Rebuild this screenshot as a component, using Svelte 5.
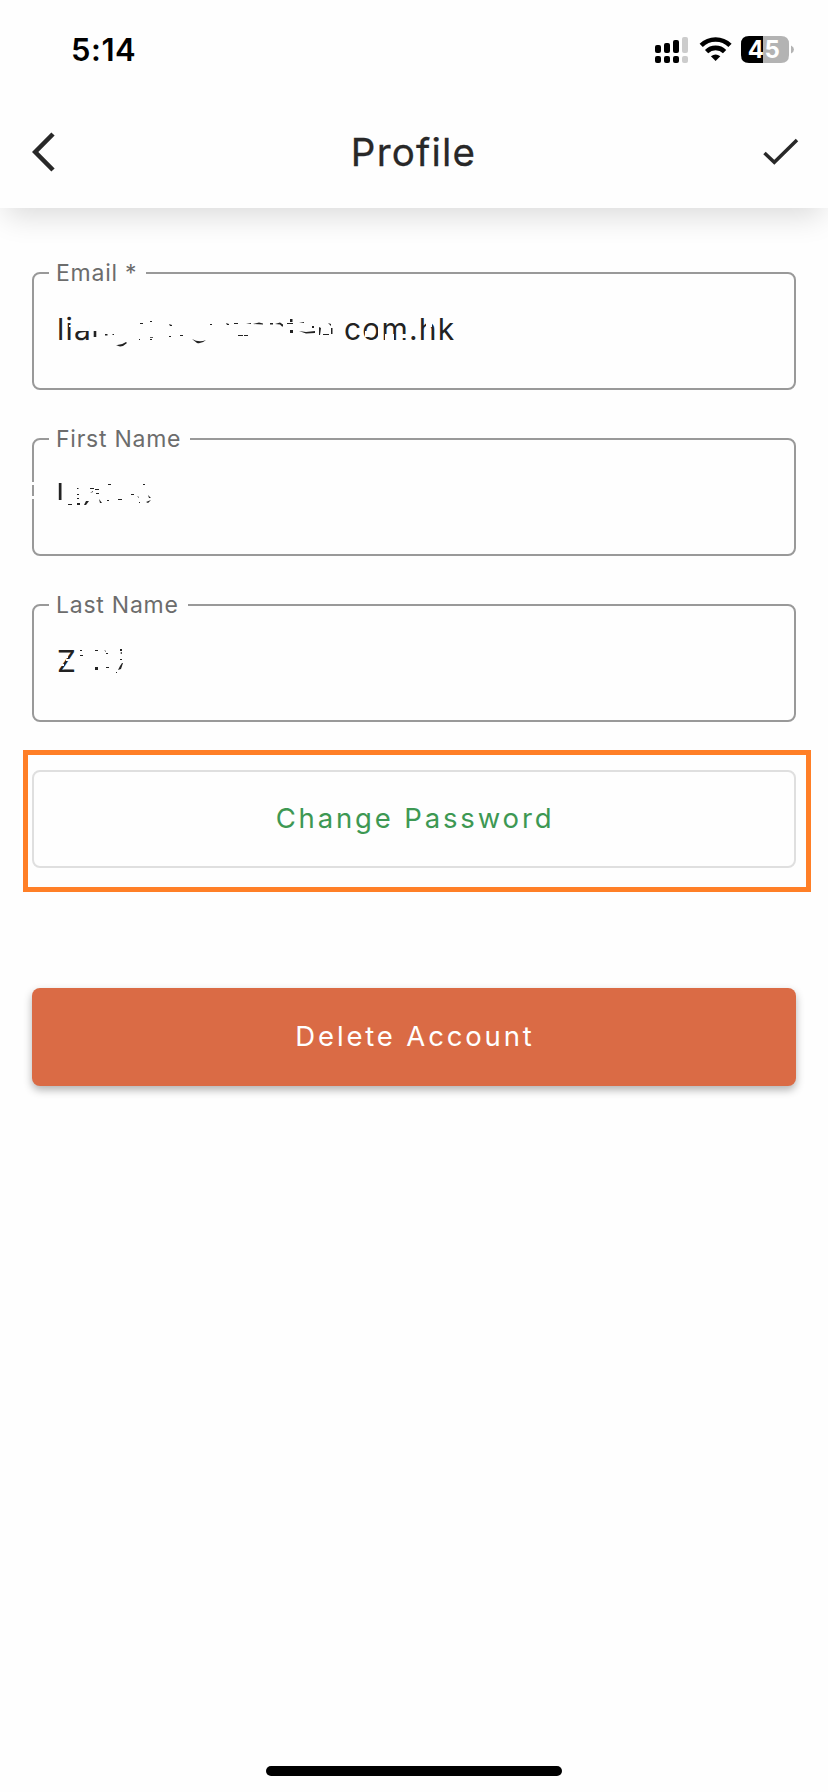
<script>
  const fields = [
    {
      label: 'Email *',
      text: 'lia',
      tail: 'com.hk',
      ink: 'M61.7 59h2.6v6h-2.6z M73 62h2.5v1.6h-2.5z M80.5 62h1.5v1h-1.5z M84 73q5 .5 10-3l1 1q-4 4-8 3.3z M108 51h3v1h-3z M118 49h2v1h-2z M107 67h1v1h-1z M118 65h3v.8h-3z M118 67h2v1h-2z M137 52l3 1v1h-2z M137 64h2v1h-2z M148 63h3v1h-3z M160 67q7 4 14 1q-4 4-9 3z M178 52h2v1h-2z M194 51l3 1v1h-2z M202 51h4v1h-4z M206 63h3v1h-3z M212 63h4v1h-4z M209 63h2v1h-2z M214 52l5-1v1z M221 52l6-1.5 4 1v1z M238 51h3v1.5h-3z M243 52l5-1.5 3 2v2h-1l-2-2z M258 47h2.5v3h-2.5z M255 51h6v1h-6z M258 58h3v3h-3z M267 51l5-1v1z M267 59l7 1 9-1v2l-9 .5z M280 54h2v2h-2z M287 55l2 1-1 7h-1z M296 51l3 1v2z M291 62h6v1h-6z M299 56h1.5v6h-1.5z',
      wipe: 'M37 53h2.5v2h-2.5z M41 47h16v12h-16z M320 58h5v4h-5z M333 59h4v6h-4z M346 55h3v9h-3z M353 62h9v8h-9z M370 62h9v4h-9z M394 50h6v5h-6z'
    },
    {
      label: 'First Name',
      text: '',
      tail: '',
      ink: 'M26.8 45h2.7v17h-2.7z M36 66h4v1h-4z M45 50h1.5v1h-1.5z M45 56h2v1h-2z M45 60h2v1h-2z M45 65h3v2h-3z M54 63h3l-3 4h-2z M58 50h4v1h-4z M63 51h4v1h-4z M58 55l3-2v1z M64 55h3v1h-3z M67 61l3 4h-2z M76 46h3v1h-3z M75 62h2v1h-2z M86 61h4v1h-4z M99 56h3v1h-3z M111 46h2v1h-2z M105 58l2 1v1z M116 57l3 3h-2z M114 64l5-2-3 3z M107 64h1v1h-1z',
      wipe: 'M0 44h3v3h-3z M0 58h3v3h-3z'
    },
    {
      label: 'Last Name',
      text: 'Z',
      tail: '',
      ink: 'M48 46h2v1h-2z M48 51h3v1h-3z M63 46h3v1h-3z M63 63h3v3h-3z M72 46l2 1v1z M74 49h2v1h-2z M74 63h3v1h-3z M88 45h2v2h-2z M88 49l2-1v2z M88 55h2v1h-2z M88 62l2-3h1l-2 6-3 1z M84 68h1v1h-1z',
      wipe: 'M25 50h11v4h-11z M34 55h8v2h-8z M24 60h8v2h-8z'
    }
  ];
</script>

<main>
  <header>
    <div class="status">
      <span class="time">5:14</span>
      <svg class="system" width="142" height="30" viewBox="0 0 142 30">
        <g fill="#000">
          <rect x="0" y="10" width="6" height="8" rx="2" />
          <rect x="9" y="8" width="6" height="10" rx="2" />
          <rect x="18" y="5" width="6" height="13" rx="2" />
          <rect x="0" y="21" width="6" height="7" rx="2" />
          <rect x="9" y="21" width="6" height="7" rx="2" />
          <rect x="18" y="21" width="6" height="7" rx="2" />
        </g>
        <g fill="#ccc">
          <rect x="27" y="2" width="6" height="16" rx="2" />
          <rect x="27" y="21" width="6" height="7" rx="2" />
        </g>
        <g fill="none" stroke="#000" stroke-width="4.6">
          <path d="M46.2 10.4a20.5 20.5 0 0 1 28.8 0" />
          <path d="M51.6 16.6a12.7 12.7 0 0 1 18 0" />
        </g>
        <path d="M60.6 26l-4.7-4.7q4.7-3.6 9.4 0z" fill="#000" />
        <path d="M94 1h14v27h-14q-8 0-8-8v-11q0-8 8-8z" fill="#000" />
        <path d="M108 1h18q8 0 8 8v11q0 8-8 8h-18z" fill="#b3b3b3" />
        <path d="M136 10.5q3 1.3 3 4t-3 4z" fill="#b3b3b3" />
        <text x="109" y="23" text-anchor="middle" fill="#fff">45</text>
      </svg>
    </div>
    <nav>
      <svg width="23" height="40" viewBox="0 0 23 40"><path d="M21 2L3.2 20L21 38" fill="none" stroke="#282828" stroke-width="4.6" /></svg>
      <h1>Profile</h1>
      <svg width="36" height="28" viewBox="0 0 36 28"><path d="M1.5 15L11.3 24.3L34 2" fill="none" stroke="#282828" stroke-width="3.5" /></svg>
    </nav>
  </header>

  <form>
    {#each fields as field}
      <fieldset>
        <legend>{field.label}</legend>
        <div class="value"><span class="start">{field.text}</span><span>{field.tail}</span></div>
        <svg class="marks" width="764" height="118" viewBox="0 0 764 118">
          <path d={field.wipe} fill="#fefefe" />
          <path d={field.ink} fill="#222" />
        </svg>
      </fieldset>
    {/each}
  </form>

  <div class="highlight"><button class="change" type="button">Change Password</button></div>
  <button class="delete" type="button">Delete Account</button>
  <div class="home"></div>
</main>

<style>
  :global(body) { background: #fefefe; }
  main {
    box-sizing: border-box;
    width: 828px;
    height: 1792px;
    display: flex;
    flex-direction: column;
    background: #fefefe;
    font-family: Inter, sans-serif;
    overflow: hidden;
  }
  header {
    height: 208px;
    flex: none;
    background: #fefefe;
    box-shadow: 0 14px 28px -6px rgba(0, 0, 0, .14);
  }
  .status {
    height: 100px;
    display: flex;
    justify-content: space-between;
    align-items: center;
    padding: 0 31px 0 71px;
    box-sizing: border-box;
  }
  .time {
    padding-bottom: 2px;
    font-size: 31px;
    font-weight: 600;
    letter-spacing: .5px;
  }
  .system text { font-size: 24px; font-weight: 700; letter-spacing: .5px; }
  nav {
    height: 104px;
    display: flex;
    align-items: center;
    justify-content: space-between;
    padding: 0 29px 0 32px;
  }
  h1 {
    margin: 0;
    padding-left: 9px;
    font-size: 38.5px;
    font-weight: 400;
    letter-spacing: 1.2px;
    color: #282828;
    -webkit-text-stroke: .3px #282828;
  }
  form {
    display: flex;
    flex-direction: column;
    gap: 48px;
    padding: 64px 32px 0;
  }
  fieldset {
    position: relative;
    box-sizing: border-box;
    height: 118px;
    min-width: 0;
    margin: 0;
    padding: 0 0 0 15px;
    border: 2px solid #999;
    border-radius: 8px;
  }
  legend {
    height: 2px;
    line-height: 2px;
    padding: 0 9px 0 7px;
    font-size: 23px;
    letter-spacing: .75px;
    color: #6c6c6c;
  }
  .value {
    display: flex;
    height: 110px;
    padding: 0 0 0 8px;
    line-height: 110px;
    font-size: 30px;
    letter-spacing: 1.2px;
    color: #222;
  }
  .start { width: 287px; }
  .marks { position: absolute; left: -2px; top: -2px; }
  .highlight {
    box-sizing: border-box;
    width: 788px;
    height: 142px;
    margin: 28px 0 0 23px;
    padding: 15px 10px 0 4px;
    border: 5px solid #ff7f27;
  }
  button {
    display: block;
    box-sizing: border-box;
    height: 98px;
    padding: 0 0 2px 2px;
    border-radius: 8px;
    font: 400 27.5px Inter, sans-serif;
    letter-spacing: 2.85px;
  }
  .change {
    width: 100%;
    border: 2px solid #dfdfdf;
    background: #fefefe;
    color: #3d9853;
  }
  .delete {
    width: 764px;
    margin: 96px 32px 0;
    border: 0;
    background: #da6b45;
    color: #fff;
    box-shadow: 0 4px 8px rgba(0, 0, 0, .3);
  }
  .home {
    width: 296px;
    height: 10px;
    margin: auto auto 16px;
    border-radius: 5px;
    background: #000;
  }
</style>
